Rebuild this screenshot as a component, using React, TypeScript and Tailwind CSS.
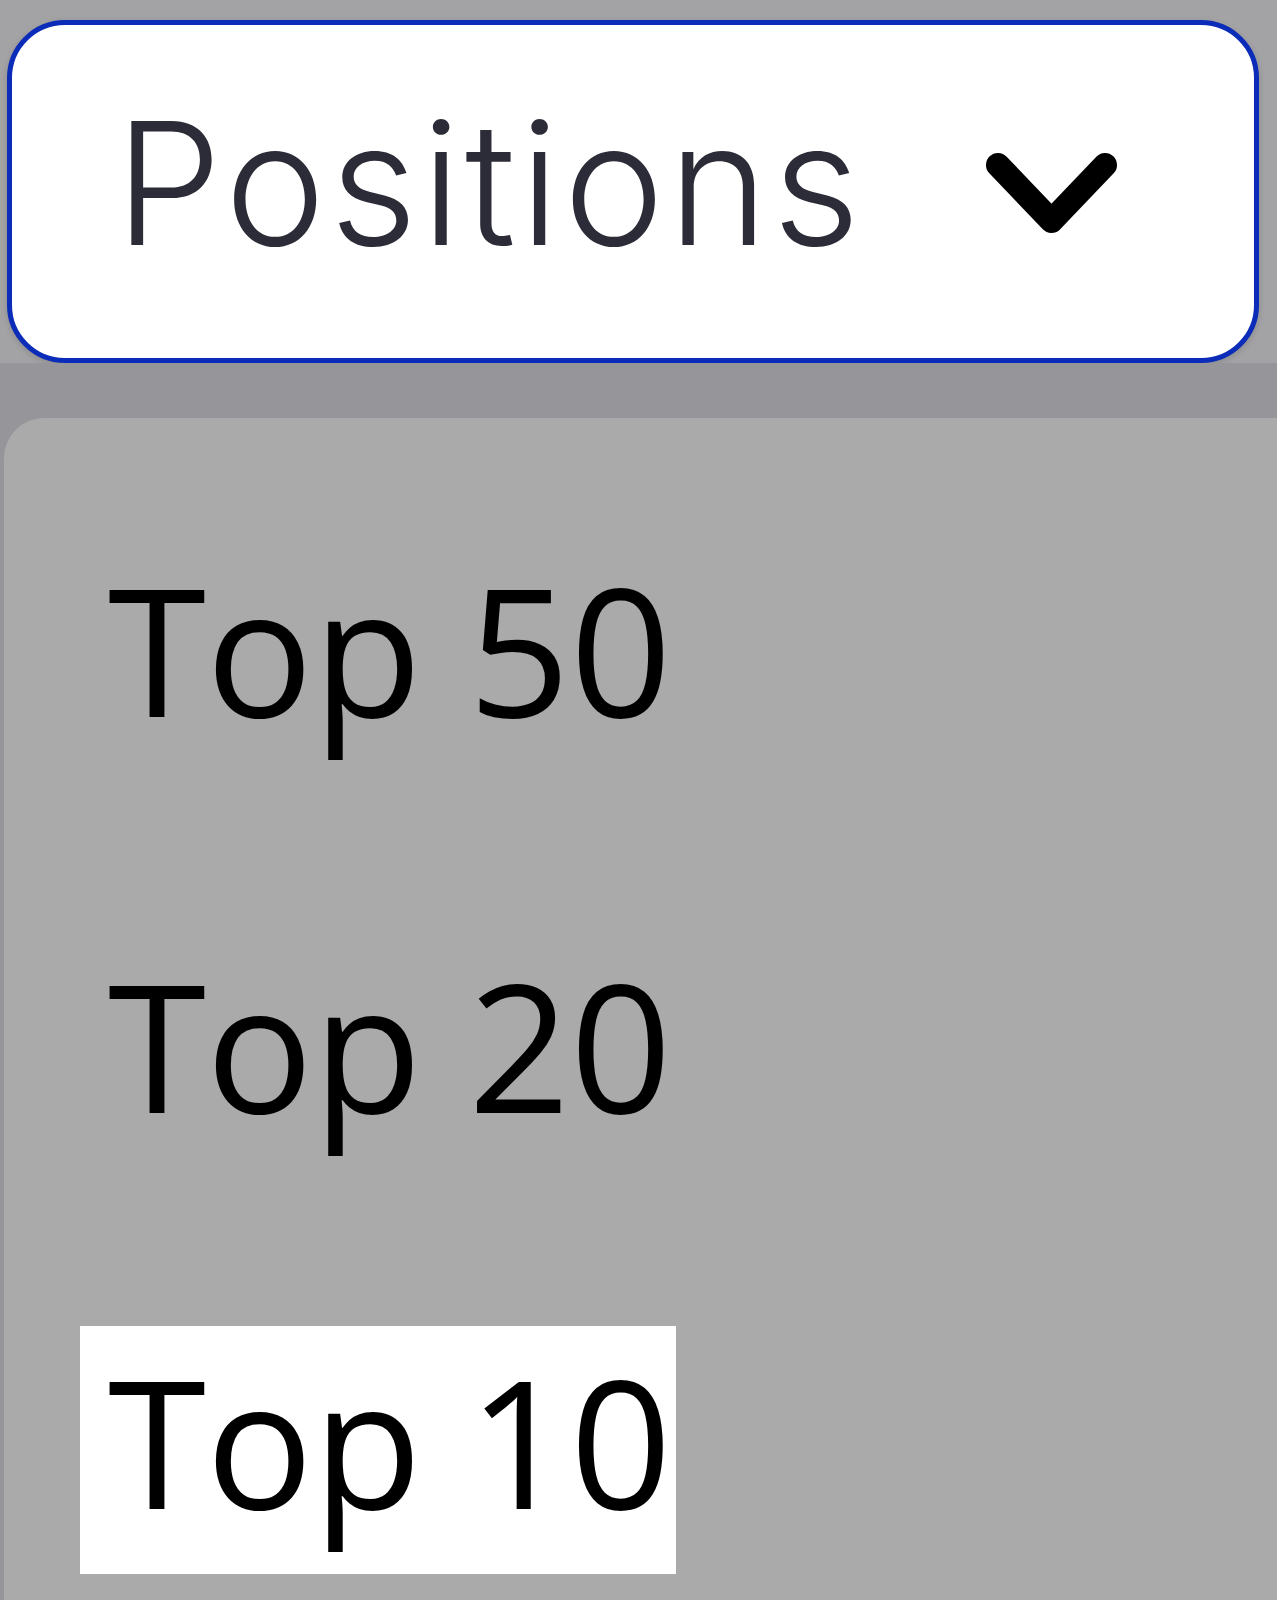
import React from 'react';

const options = ['Top 50', 'Top 20', 'Top 10'];

const App: React.FC = () => {
  const selected = 'Top 10';

  return (
    <div className="min-h-[1600px] w-full overflow-hidden bg-[#a3a3a5]">
      {/* Select trigger */}
      <div className="pt-[20px] pl-[7px] pr-[18px]">
        <button
          type="button"
          className="flex h-[343px] w-full items-start rounded-[58px] border-[5px] border-[#0a2cb8] bg-white pl-[103px] pr-[137px] pt-[73px] text-left shadow-[0_2px_6px_rgba(0,0,0,0.15)]"
        >
          <span
            className="text-[170px] font-light leading-none tracking-[4px] text-[#2c2c38]"
            style={{ fontFamily: 'Inter, "Noto Sans", sans-serif' }}
          >
            Positions
          </span>
          <svg
            className="ml-auto mt-[55px] block h-[83px] w-[131px] shrink-0"
            viewBox="0 0 131 83"
            fill="none"
          >
            <polyline
              points="12,12 65.5,68 119,12"
              stroke="#000000"
              strokeWidth={24}
              strokeLinecap="round"
              strokeLinejoin="round"
            />
          </svg>
        </button>
      </div>

      {/* Options list */}
      <div className="bg-[#96969a] pt-[55px] pl-[4px]">
        <div className="min-h-[1182px] rounded-tl-[40px] bg-[#aaaaaa] pl-[76px] pt-[116px]">
          <ul className="flex flex-col gap-[148px]">
            {options.map(opt => (
              <li key={opt}>
                <div
                  className={
                    'inline-block h-[248px] pl-[28px] pr-[4px] pt-[25px] text-[178px] font-medium leading-none text-black ' +
                    (opt === selected ? 'bg-white' : '')
                  }
                  style={{ fontFamily: '"Open Sans", "Noto Sans", sans-serif' }}
                >
                  {opt}
                </div>
              </li>
            ))}
          </ul>
        </div>
      </div>
    </div>
  );
};

export default App;
